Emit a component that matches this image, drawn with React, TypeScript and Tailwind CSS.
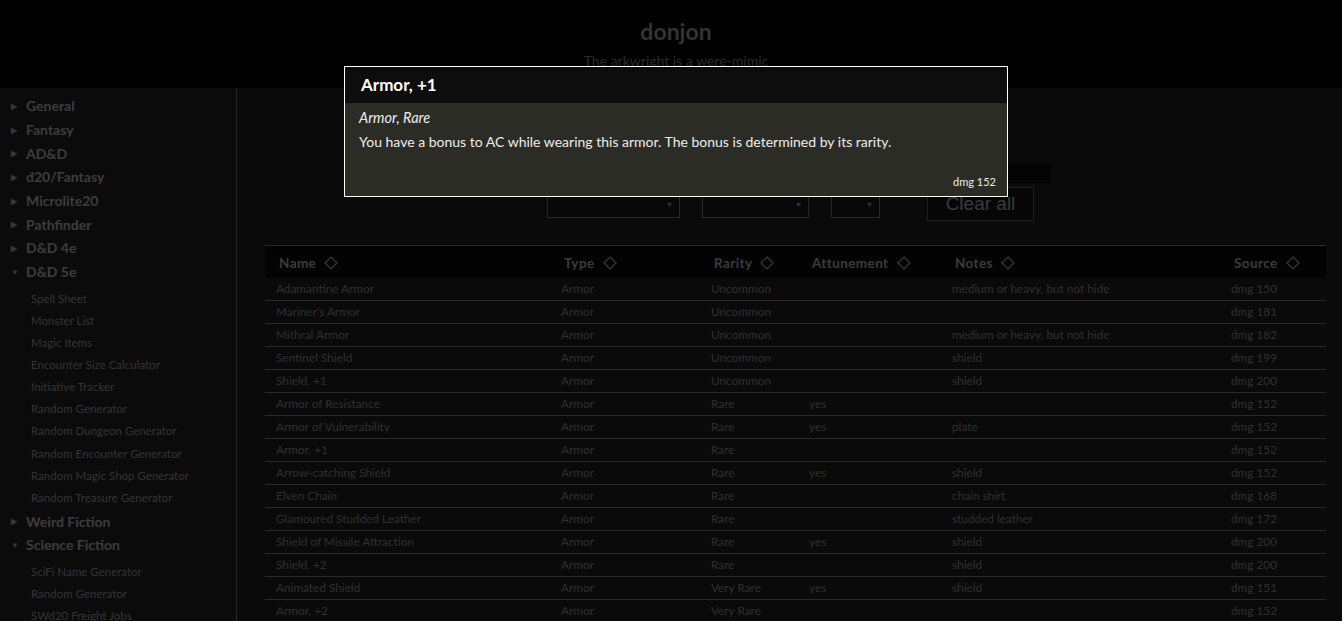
import React from "react";

type Item = {
  name: string;
  type: string;
  rarity: string;
  attune: string;
  notes: string;
  source: string;
};

const items: Item[] = [
  { name: "Adamantine Armor", type: "Armor", rarity: "Uncommon", attune: "", notes: "medium or heavy, but not hide", source: "dmg 150" },
  { name: "Mariner's Armor", type: "Armor", rarity: "Uncommon", attune: "", notes: "", source: "dmg 181" },
  { name: "Mithral Armor", type: "Armor", rarity: "Uncommon", attune: "", notes: "medium or heavy, but not hide", source: "dmg 182" },
  { name: "Sentinel Shield", type: "Armor", rarity: "Uncommon", attune: "", notes: "shield", source: "dmg 199" },
  { name: "Shield, +1", type: "Armor", rarity: "Uncommon", attune: "", notes: "shield", source: "dmg 200" },
  { name: "Armor of Resistance", type: "Armor", rarity: "Rare", attune: "yes", notes: "", source: "dmg 152" },
  { name: "Armor of Vulnerability", type: "Armor", rarity: "Rare", attune: "yes", notes: "plate", source: "dmg 152" },
  { name: "Armor, +1", type: "Armor", rarity: "Rare", attune: "", notes: "", source: "dmg 152" },
  { name: "Arrow-catching Shield", type: "Armor", rarity: "Rare", attune: "yes", notes: "shield", source: "dmg 152" },
  { name: "Elven Chain", type: "Armor", rarity: "Rare", attune: "", notes: "chain shirt", source: "dmg 168" },
  { name: "Glamoured Studded Leather", type: "Armor", rarity: "Rare", attune: "", notes: "studded leather", source: "dmg 172" },
  { name: "Shield of Missile Attraction", type: "Armor", rarity: "Rare", attune: "yes", notes: "shield", source: "dmg 200" },
  { name: "Shield, +2", type: "Armor", rarity: "Rare", attune: "", notes: "shield", source: "dmg 200" },
  { name: "Animated Shield", type: "Armor", rarity: "Very Rare", attune: "yes", notes: "shield", source: "dmg 151" },
  { name: "Armor, +2", type: "Armor", rarity: "Very Rare", attune: "", notes: "", source: "dmg 152" },
];

const nav: { label: string; open?: boolean; children?: string[] }[] = [
  { label: "General" },
  { label: "Fantasy" },
  { label: "AD&D" },
  { label: "d20/Fantasy" },
  { label: "Microlite20" },
  { label: "Pathfinder" },
  { label: "D&D 4e" },
  {
    label: "D&D 5e",
    open: true,
    children: [
      "Spell Sheet",
      "Monster List",
      "Magic Items",
      "Encounter Size Calculator",
      "Initiative Tracker",
      "Random Generator",
      "Random Dungeon Generator",
      "Random Encounter Generator",
      "Random Magic Shop Generator",
      "Random Treasure Generator",
    ],
  },
  { label: "Weird Fiction" },
  {
    label: "Science Fiction",
    open: true,
    children: ["SciFi Name Generator", "Random Generator", "SWd20 Freight Jobs"],
  },
];

const cols = [
  { label: "Name", w: "w-[285px]" },
  { label: "Type", w: "w-[150px]" },
  { label: "Rarity", w: "w-[98px]" },
  { label: "Attunement", w: "w-[143px]" },
  { label: "Notes", w: "w-[279px]" },
  { label: "Source", w: "w-[106px]" },
];

function Diamond() {
  return (
    <svg width="14" height="14" viewBox="0 0 14 14" className="ml-[8px] shrink-0">
      <path d="M7 1 L13 7 L7 13 L1 7 Z" fill="none" stroke="currentColor" strokeWidth="1.2" />
    </svg>
  );
}

function Select({ w }: { w: string }) {
  return (
    <div className={`${w} h-[28px] border border-[#8a8a8a] bg-[#1c1c1c] flex items-center justify-end pr-[6px]`}>
      <span className="text-[7px] text-[#aaa]">▼</span>
    </div>
  );
}

export default function App() {
  return (
    <div className="relative min-h-screen bg-[#222] font-['Lato',sans-serif] overflow-hidden">
      <header className="h-[88px] bg-black flex flex-col items-center pl-[10px]">
        <h1 className="mt-[17px] text-[23px] leading-[28px] font-bold text-[#ababab]">donjon</h1>
        <p className="mt-[7px] text-[14px] leading-[18px] text-[#8c8c8c]">The arkwright is a were-mimic</p>
      </header>

      <div className="flex">
        <aside className="w-[237px] shrink-0 bg-[#252525] border-r border-[#8a8a8a] pt-[6px] min-h-[560px]">
          {nav.map((n) => (
            <div key={n.label}>
              <div className="h-[23.7px] flex items-center pl-[11px] text-[14px] font-bold text-[#c8c8c8]">
                <span className="w-[15px] text-[8px] text-[#b8b8b8]">{n.open ? "▼" : "▶"}</span>
                {n.label}
              </div>
              {n.children && (
                <div className="pt-[4px] pb-[1px]">
                  {n.children.map((c) => (
                    <div key={c} className="h-[22.1px] flex items-center pl-[31px] text-[11.5px] text-[#a8a8a8]">
                      {c}
                    </div>
                  ))}
                </div>
              )}
            </div>
          ))}
        </aside>

        <main className="flex-1 pl-[28px] pr-[16px]">
          <div className="h-[157px] flex flex-col items-center pr-[10px]">
            <div className="mt-[75px] ml-[-1px] w-[521px] h-[20px] bg-[#101010]" />
            <div className="mt-[4px] flex items-start">
              <div className="mt-[3px] flex gap-[22px]">
                <Select w="w-[133px]" />
                <Select w="w-[107px]" />
                <Select w="w-[49px]" />
              </div>
              <button className="ml-[47px] w-[107px] h-[34px] border border-[#666] bg-[#141414] text-[19px] text-[#c0c0c0] font-['Liberation_Sans',sans-serif]">
                Clear all
              </button>
            </div>
          </div>

          <table className="w-[1061px] border-collapse table-fixed border-t border-[#8c8c8c]">
            <thead>
              <tr className="h-[32px] bg-[#0c0c0c]">
                {cols.map((c) => (
                  <th key={c.label} className={`${c.w} text-left pl-[14px] pt-[3px] font-bold text-[13.5px] tracking-[0.03em] text-[#c0c0c0]`}>
                    <span className="inline-flex items-center">
                      {c.label}
                      <Diamond />
                    </span>
                  </th>
                ))}
              </tr>
            </thead>
            <tbody>
              {items.map((it) => (
                <tr key={it.name} className="h-[23px] border-b border-[#8c8c8c] text-[11.8px] text-[#9a9a9a]">
                  <td className="pl-[11px]">{it.name}</td>
                  <td className="pl-[11px]">{it.type}</td>
                  <td className="pl-[11px]">{it.rarity}</td>
                  <td className="pl-[11px]">{it.attune}</td>
                  <td className="pl-[11px]">{it.notes}</td>
                  <td className="pl-[11px]">{it.source}</td>
                </tr>
              ))}
            </tbody>
          </table>
        </main>
      </div>

      <div className="fixed inset-0 bg-black/70" />

      <div className="fixed left-[344px] top-[66px] w-[664px] h-[131px] border border-white flex flex-col">
        <div className="h-[36px] bg-[#0d0d0d] flex items-center pl-[16px] text-[17px] font-bold text-white">
          Armor, +1
        </div>
        <div className="flex-1 bg-[#2c2c27] pl-[14px] pr-[11px] pt-[5px] text-[14px] text-[#ececec] flex flex-col">
          <p className="italic text-[14.5px] leading-[19px]">Armor, Rare</p>
          <p className="mt-[5px] leading-[19px]">
            You have a bonus to AC while wearing this armor. The bonus is determined by its rarity.
          </p>
          <p className="mt-auto mb-[7px] self-end text-[11px] leading-[14px]">dmg 152</p>
        </div>
      </div>
    </div>
  );
}
